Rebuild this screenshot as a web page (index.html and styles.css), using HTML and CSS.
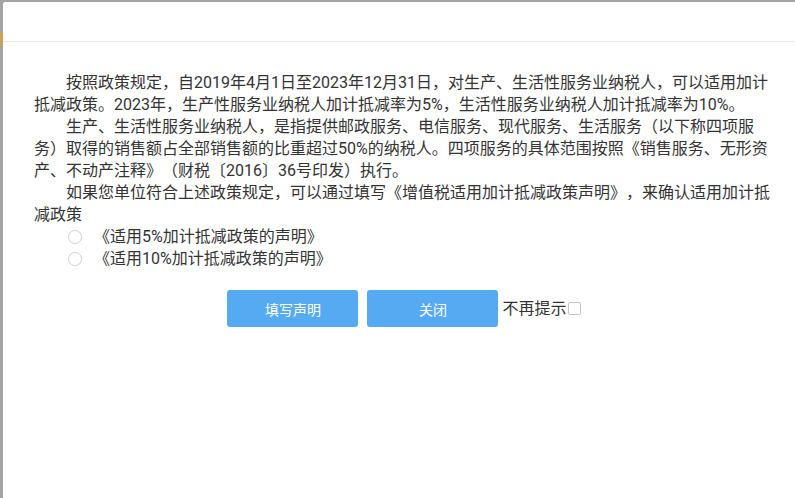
FILE: index.html
```html
<!DOCTYPE html>
<html lang="zh-CN">
<head>
    <meta charset="UTF-8">
    <meta name="viewport" content="width=device-width, initial-scale=1.0">
    <title>加计抵减政策提示</title>
    <link rel="stylesheet" href="styles.css">
</head>
<body>

    <!-- 背后页面露出的一点颜色 -->
    <div class="page-peek"></div>

    <!-- 弹出层 -->
    <div class="layer">
        <div class="layer-title"></div>
        <div class="layer-content">
            <p class="para">按照政策规定，自2019年4月1日至2023年12月31日，对生产、生活性服务业纳税人，可以适用加计抵减政策。2023年，生产性服务业纳税人加计抵减率为5%，生活性服务业纳税人加计抵减率为10%。</p>
            <p class="para">生产、生活性服务业纳税人，是指提供邮政服务、电信服务、现代服务、生活服务（以下称四项服务）取得的销售额占全部销售额的比重超过50%的纳税人。四项服务的具体范围按照《销售服务、无形资产、不动产注释》（财税〔2016〕36号印发）执行。</p>
            <p class="para">如果您单位符合上述政策规定，可以通过填写《增值税适用加计抵减政策声明》，来确认适用加计抵减政策</p>

            <div class="radio-list">
                <label class="radio-item"><input type="radio" name="rate" value="5">《适用5%加计抵减政策的声明》</label>
                <label class="radio-item"><input type="radio" name="rate" value="10">《适用10%加计抵减政策的声明》</label>
            </div>

            <div class="btn-row">
                <button class="layer-btn">填写声明</button>
                <button class="layer-btn">关闭</button>
                <label class="no-tip">不再提示<input type="checkbox"></label>
            </div>
        </div>
    </div>

</body>
</html>
```

FILE: styles.css
```css
body {
    margin: 0;
    background-color: #a3a3a3;
    font-family: Roboto, "Noto Sans CJK SC", sans-serif;
    color: #333;
    overflow: hidden;
}
.page-peek {
    position: absolute;
    top: 32px;
    left: 0;
    width: 3px;
    height: 14px;
    background: #c9a35c;
}
.layer {
    position: relative;
    margin: 2px 0 0 3px;
    height: 496px;
    background: #fff;
    border-top-left-radius: 2px;
}
.layer-title {
    height: 39px;
    border-bottom: 1px solid #e6e6e6;
}
.layer-content {
    padding: 30px 25px 0 31px;
    font-size: 16px;
    line-height: 22px;
    text-spacing-trim: space-all;
}
.para {
    margin: 0;
    text-indent: 2em;
}
.radio-list {
    padding-left: 34px;
}
.radio-item {
    display: flex;
    align-items: center;
    height: 22px;
}
.radio-item input {
    appearance: none;
    width: 14px;
    height: 14px;
    margin: 0 12px 0 0;
    border: 1px solid #d2d2d2;
    border-radius: 50%;
    background: #fff;
}
.btn-row {
    display: flex;
    justify-content: center;
    align-items: center;
    margin-top: 20px;
    padding-left: 4px;
}
.layer-btn {
    width: 131px;
    height: 37px;
    margin-right: 9px;
    background-color: #56aaf1;
    color: #fff;
    border: none;
    border-radius: 3px;
    font-family: inherit;
    font-size: 14px;
    cursor: pointer;
}
.layer-btn:last-of-type {
    margin-right: 4px;
}
.no-tip {
    display: flex;
    align-items: center;
    font-size: 16px;
}
.no-tip input {
    appearance: none;
    width: 13px;
    height: 13px;
    margin: 0 0 0 1px;
    border: 1px solid #c4c4c4;
    border-radius: 2px;
    background: #fff;
}
```
